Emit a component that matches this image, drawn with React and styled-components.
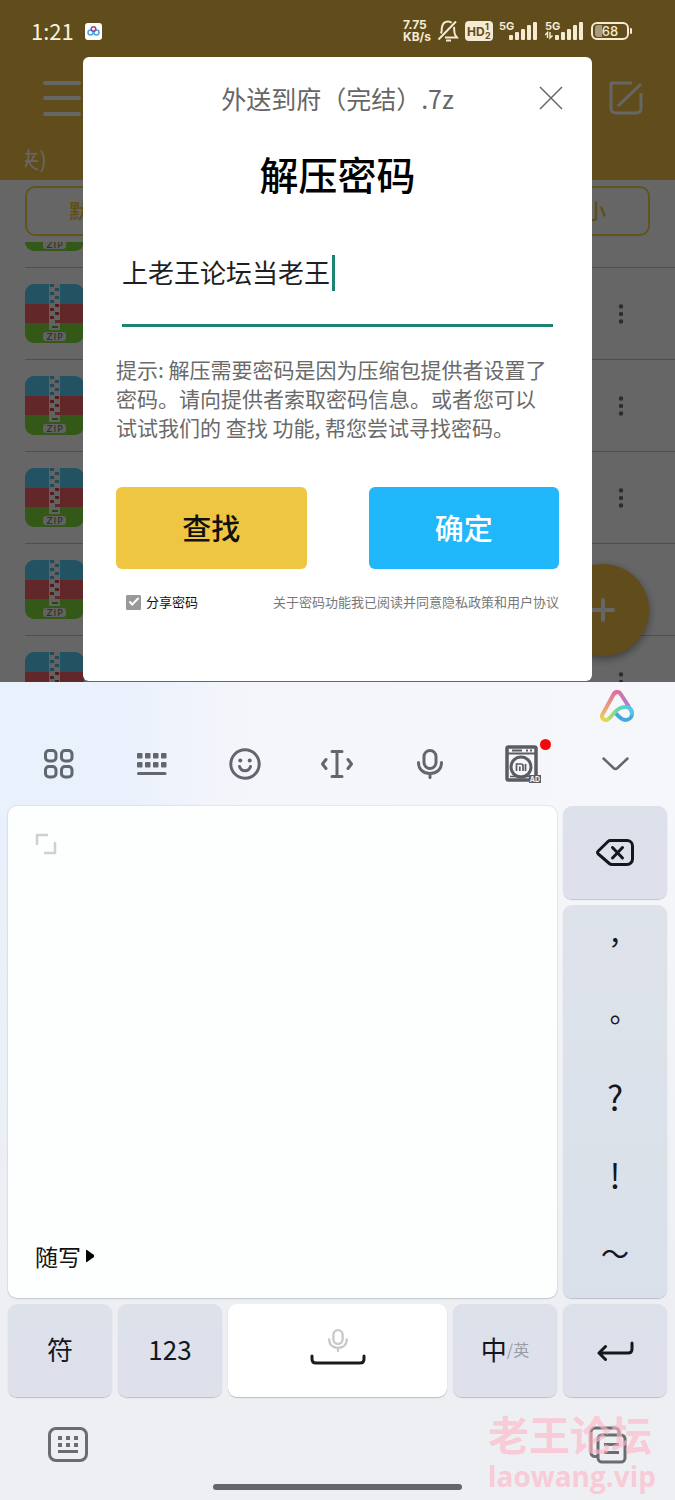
import React, { useState } from 'react';
import styled, { createGlobalStyle } from 'styled-components';

const FILES = [1, 2, 3, 4, 5, 6];
const PUNCTUATION = [
  { mark: '，', size: 28 },
  { mark: '。', size: 28 },
  { mark: '?', size: 34 },
  { mark: '!', size: 34 },
  { mark: '～', size: 28 },
];

const ZipIcon = () => (
  <svg width="59" height="59" viewBox="0 0 59 59">
    <defs>
      <clipPath id="zipShape"><rect width="59" height="59" rx="9" /></clipPath>
    </defs>
    <g clipPath="url(#zipShape)">
      <rect width="59" height="20" fill="#58cdf6" />
      <rect y="20" width="59" height="20" fill="#f56468" />
      <rect y="39" width="59" height="20" fill="#7fdc3c" />
      <rect x="24" width="11" height="46" fill="#f4f4f4" />
      {[0, 1, 2, 3, 4, 5, 6, 7, 8].map((i) => (
        <rect
          key={i}
          x={i % 2 ? 30 : 25}
          y={i * 4}
          width="4"
          height="3"
          fill={i < 5 ? '#58b4dc' : '#d0464a'}
        />
      ))}
      <rect x="30" y="36" width="5" height="3" fill="#f56468" />
      <rect x="27" y="42" width="6" height="2" fill="#5fae2c" />
      <rect x="18" y="48" width="23" height="9" rx="3" fill="#f4f4f4" />
      <text x="30" y="56" textAnchor="middle" fontSize="9" letterSpacing="1" fontFamily="DejaVu Sans, sans-serif" fill="#4f7a30">ZIP</text>
    </g>
  </svg>
);

const Signal = ({ data }) => (
  <svg width="40" height="24" viewBox="0 0 40 24" fill="#f5ead2">
    <text x="0" y="11" fontSize="11" fontWeight="700" fontFamily="Inter, sans-serif">5G</text>
    <rect x="10" y="16" width="4" height="5" rx="1" />
    <rect x="16" y="13" width="4" height="8" rx="1" />
    <rect x="22" y="10" width="4" height="11" rx="1" />
    <rect x="28" y="6" width="4" height="15" rx="1" />
    <rect x="34" y="3" width="4" height="18" rx="1" />
    {data && <path d="M0 16 2.500 13.500V19M5 13v6l2.500-2.500" fill="none" stroke="#f5ead2" strokeWidth="1.500" />}
  </svg>
);

const StatusIcons = () => (
  <>
    <Speed>7.75<br />KB/s</Speed>
    <svg width="22" height="24" viewBox="0 0 22 24" fill="none" stroke="#f5ead2" strokeWidth="2">
      <path d="M1.500 20.500 19 2.500" />
      <path d="M4 14.500c1-2 .500-4 1-6.500C5.700 4.600 8 2.500 11 2.500c1.500 0 2.700.500 3.700 1.300" />
      <path d="M17 8c.500 3-.200 6 1.200 8l1.800 2.500H8" />
      <path d="M9 21.500h5" />
    </svg>
    <svg width="28" height="20" viewBox="0 0 28 20">
      <rect width="28" height="20" rx="4" fill="#f5ead2" />
      <g fill="#614c1c" fontFamily="Inter, sans-serif" fontWeight="700">
        <text x="2" y="15" fontSize="12">HD</text>
        <text x="20" y="9" fontSize="9">1</text>
        <text x="20" y="18" fontSize="9">2</text>
      </g>
    </svg>
    <Signal />
    <Signal data />
    <svg width="42" height="20" viewBox="0 0 42 20">
      <rect x="1" y="2" width="36" height="16" rx="5" fill="none" stroke="#f5ead2" strokeWidth="2" />
      <path d="M4 7a3 3 0 0 1 3-3h4v12H7a3 3 0 0 1-3-3z" fill="#a99a78" />
      <rect x="39" y="7" width="2" height="6" rx="1" fill="#f5ead2" />
      <text x="19" y="15" textAnchor="middle" fontSize="13" fontWeight="500" fontFamily="Inter, sans-serif" fill="#f5ead2">68</text>
    </svg>
  </>
);

const CloudAppIcon = () => (
  <svg width="17" height="17" viewBox="0 0 17 17" fill="none" strokeWidth="1.500">
    <rect width="17" height="17" rx="3" fill="#fff" />
    <circle cx="5.500" cy="9.500" r="2.500" stroke="#49a4e8" />
    <circle cx="11.500" cy="9.500" r="2.500" stroke="#49a4e8" />
    <circle cx="8.500" cy="6" r="2.300" stroke="#b0407c" />
  </svg>
);

const AssistantLogo = () => (
  <svg width="34" height="32" viewBox="0 0 34 32" fill="none" strokeWidth="4" strokeLinecap="round" strokeLinejoin="round">
    <defs>
      <linearGradient id="legLeft" x1="0" y1="1" x2="0" y2="0">
        <stop offset="0" stopColor="#ead64c" />
        <stop offset=".45" stopColor="#eda07c" />
        <stop offset="1" stopColor="#de6f9c" />
      </linearGradient>
      <linearGradient id="legRight" x1="0" y1="0" x2="1" y2="1">
        <stop offset="0" stopColor="#e0709c" />
        <stop offset="1" stopColor="#a880d0" />
      </linearGradient>
      <linearGradient id="loop" x1="0" y1="0" x2="1" y2="0">
        <stop offset="0" stopColor="#dcdc50" />
        <stop offset=".5" stopColor="#5ad8b4" />
        <stop offset="1" stopColor="#58c4e8" />
      </linearGradient>
    </defs>
    <path d="M28.500 16 21 4.500C19 1.300 15.500 1.300 13.500 4.500" stroke="url(#legRight)" />
    <path d="M6 30c-3.400 0-5-3-3.300-6L13.500 4.500c1-1.700 2.400-2.500 3.800-2.500" stroke="url(#legLeft)" />
    <path d="M16 23.500c2.500 3 5.500 6.500 9.500 6.500 3.600 0 6.500-2.700 6.500-6.500 0-2-.800-3.700-2-5" stroke="#45a8dc" />
    <path d="M6 30c5.500 0 8-13 19.500-13 2.700 0 6.500 2 6.500 6.500" stroke="url(#loop)" />
  </svg>
);

const GridIcon = () => (
  <svg width="32" height="32" viewBox="0 0 32 32" fill="none" stroke="#63666d" strokeWidth="3">
    <rect x="2.500" y="2.500" width="10.500" height="10.500" rx="3.500" />
    <rect x="18.500" y="2.500" width="10.500" height="10.500" rx="3.500" />
    <rect x="2.500" y="18.500" width="10.500" height="10.500" rx="3.500" />
    <rect x="18.500" y="18.500" width="10.500" height="10.500" rx="3.500" />
  </svg>
);

const KeysIcon = () => (
  <svg width="30" height="24" viewBox="0 0 30 24" fill="#63666d">
    {[0, 8, 16, 24].map((x) => (
      <React.Fragment key={x}>
        <rect x={x} y="1" width="5.500" height="5.500" rx="1" />
        <rect x={x} y="10" width="5.500" height="5.500" rx="1" />
      </React.Fragment>
    ))}
    <rect y="20" width="29.500" height="3" rx="1.500" />
  </svg>
);

const SmileIcon = () => (
  <svg width="32" height="32" viewBox="0 0 32 32" fill="none" stroke="#63666d" strokeWidth="3" strokeLinecap="round">
    <circle cx="16" cy="16" r="14.200" />
    <path d="M10.500 18.500c1 3 3 4.300 5.500 4.300s4.500-1.300 5.500-4.300" />
    <g fill="#63666d" stroke="none">
      <circle cx="11.300" cy="12.500" r="2" />
      <circle cx="20.700" cy="12.500" r="2" />
    </g>
  </svg>
);

const CursorIcon = () => (
  <svg width="32" height="28" viewBox="0 0 32 28" fill="none" stroke="#63666d" strokeWidth="3" strokeLinecap="round" strokeLinejoin="round">
    <path d="M11 1.500h10M11 26.500h10M16 1.500v25M5 9.500 1.500 14 5 18.500M27 9.500l3.500 4.500-3.500 4.500" />
  </svg>
);

const MicIcon = ({ width = 26, height = 30, color = '#63666d' }) => (
  <svg width={width} height={height} viewBox="0 0 26 30" fill="none" stroke={color} strokeWidth="3" strokeLinecap="round">
    <rect x="7" y="1.500" width="12" height="18" rx="6" />
    <path d="M1.500 13.500c0 7 5 11 11.500 11s11.500-4 11.500-11M13 25v3.500" />
  </svg>
);

const WasherIcon = () => (
  <svg width="36" height="38" viewBox="0 0 36 38" fill="none" stroke="#5a5c61">
    <rect x="2" y="2" width="29" height="33" rx="1.500" strokeWidth="3.500" />
    <path d="M3 8.500h27" strokeWidth="2" />
    <path d="M7 5.500h10M21 5.500h2M25 5.500h2" strokeWidth="2" />
    <circle cx="16" cy="22" r="10" strokeWidth="3" />
    <path d="M11.500 26v-7h4.500c1.500 0 2 1 2 2v5M14.800 21.500v4.500M20.500 19v7" strokeWidth="1.700" />
    <path d="M5 31.500h22" strokeWidth="1.500" />
    <rect x="24" y="30" width="12" height="8" fill="#5a5c61" stroke="none" />
    <text x="30" y="36.500" textAnchor="middle" fontSize="7" fontWeight="700" fontFamily="Inter, sans-serif" fill="#f5f6fa" stroke="none">AD</text>
  </svg>
);

const ChevronIcon = () => (
  <svg width="27" height="14" viewBox="0 0 27 14" fill="none" stroke="#63666d" strokeWidth="2.500" strokeLinecap="round" strokeLinejoin="round">
    <path d="M1.500 1.500 11.500 11q2 1.800 4 0l10-9.500" />
  </svg>
);

const BackspaceIcon = () => (
  <svg width="38" height="27" viewBox="0 0 38 27" fill="none" stroke="#14171c" strokeWidth="3" strokeLinecap="round" strokeLinejoin="round">
    <path d="M14.500 1.500H31a5.500 5.500 0 0 1 5.500 5.500v13a5.500 5.500 0 0 1-5.500 5.500H16q-1.500 0-2.700-1L2.300 15q-1.600-1.500 0-3L12 2.500q1-1 2.500-1z" />
    <path d="m16.500 8.500 10 10.500M26.500 8.500l-10 10.500" />
  </svg>
);

const SpaceIcon = () => (
  <svg width="56" height="11" viewBox="0 0 56 11" fill="none" stroke="#1b1b1d" strokeWidth="3" strokeLinecap="round">
    <path d="M2 2v3q0 4 4 4h44q4 0 4-4V2" />
  </svg>
);

const EnterIcon = () => (
  <svg width="37" height="20" viewBox="0 0 37 20" fill="none" stroke="#14171c" strokeWidth="3" strokeLinecap="round" strokeLinejoin="round">
    <path d="M35 2v6q0 4-4 4H2M8.500 5.500 2 12l6.500 6.500" />
  </svg>
);

const SwitchKeyboardIcon = () => (
  <svg width="40" height="35" viewBox="0 0 40 35" fill="#6a6c70">
    <rect x="1.500" y="1.500" width="37" height="32" rx="6.500" fill="none" stroke="#6a6c70" strokeWidth="3" />
    {[10, 18, 26].map((x) => (
      <React.Fragment key={x}>
        <rect x={x} y="9" width="4" height="4" />
        <rect x={x} y="16" width="4" height="4" />
      </React.Fragment>
    ))}
    <rect x="10" y="23" width="20" height="3" />
  </svg>
);

const ClipboardIcon = () => (
  <svg width="38" height="38" viewBox="0 0 38 38" fill="none" stroke="#6a6c70" strokeWidth="3">
    <rect x="9" y="9" width="27" height="27" rx="4" />
    <path d="M8 30.500H6a4 4 0 0 1-4-4V6a4 4 0 0 1 4-4h20a4 4 0 0 1 4 4v2" />
    <path d="M15 18.500h15M15 26.500h15" />
  </svg>
);

const App = () => {
  const [password, setPassword] = useState('上老王论坛当老王');
  const [share, setShare] = useState(true);
  const [open, setOpen] = useState(true);

  return (
    <>
      <GlobalStyle />
      <Screen>
        <AppArea>
          <StatusBar>
            <Clock>1:21</Clock>
            <CloudAppIcon />
            <StatusRight>
              <StatusIcons />
            </StatusRight>
          </StatusBar>
          <TopBar>
            <IconButton aria-label="菜单">
              <svg width="56" height="36" viewBox="0 0 56 36" stroke="#fff" strokeWidth="4" strokeLinecap="round">
                <path d="M3 3h34M3 18h34M3 34h34" />
              </svg>
            </IconButton>
            <IconButton aria-label="编辑">
              <svg width="34" height="34" viewBox="0 0 34 34" fill="none" stroke="#fff" strokeWidth="3" strokeLinejoin="round">
                <path d="M23 2H2v25q0 5 5 5h20q5 0 5-5V12M9 25 32 3" />
              </svg>
            </IconButton>
          </TopBar>
          <PathBar><Crumb>夹)</Crumb></PathBar>
          <SortBar>
            <SortButton>默认</SortButton>
            <SortButton>大小</SortButton>
          </SortBar>
          <FileList>
            {FILES.map((id) => (
              <FileRow key={id}>
                <ZipIcon />
                <IconButton aria-label="更多">
                  <svg width="6" height="20" viewBox="0 0 6 20" fill="#707070">
                    <circle cx="3" cy="2.500" r="2.200" />
                    <circle cx="3" cy="10" r="2.200" />
                    <circle cx="3" cy="17.500" r="2.200" />
                  </svg>
                </IconButton>
              </FileRow>
            ))}
          </FileList>
          <AddButton aria-label="添加">
            <svg width="24" height="24" viewBox="0 0 24 24" stroke="#fff" strokeWidth="4" strokeLinecap="round">
              <path d="M12 2v20M2 12h20" />
            </svg>
          </AddButton>

          {open && (
            <Overlay>
              <Dialog role="dialog" aria-modal="true">
                <DialogHeader>
                  <FileName>外送到府（完结）.7z</FileName>
                  <CloseButton aria-label="关闭" onClick={() => setOpen(false)}>
                    <svg width="24" height="24" viewBox="0 0 24 24" stroke="#666" strokeWidth="1.500">
                      <path d="m1 1 22 22M23 1 1 23" />
                    </svg>
                  </CloseButton>
                </DialogHeader>
                <Title>解压密码</Title>
                <Field>
                  <PasswordInput
                    aria-label="解压密码"
                    value={password}
                    onChange={(e) => setPassword(e.target.value)}
                    style={{ width: `${password.length}em` }}
                  />
                  <Caret />
                </Field>
                <Hint>
                  提示: 解压需要密码是因为压缩包提供者设置了<br />
                  密码。请向提供者索取密码信息。或者您可以<br />
                  试试我们的 查找 功能, 帮您尝试寻找密码。
                </Hint>
                <Actions>
                  <ActionButton $bg="#efc642" $color="#111">查找</ActionButton>
                  <ActionButton $bg="#20b7fb" $color="#fff">确定</ActionButton>
                </Actions>
                <DialogFooter>
                  <ShareLabel>
                    <Checkbox type="checkbox" checked={share} onChange={() => setShare(!share)} />
                    分享密码
                  </ShareLabel>
                  <Agreement href="#agreement">关于密码功能我已阅读并同意隐私政策和用户协议</Agreement>
                </DialogFooter>
              </Dialog>
            </Overlay>
          )}
        </AppArea>

        <Keyboard>
          <LogoRow>
            <IconButton aria-label="助手"><AssistantLogo /></IconButton>
          </LogoRow>
          <Toolbar>
            <IconButton aria-label="功能"><GridIcon /></IconButton>
            <IconButton aria-label="键盘"><KeysIcon /></IconButton>
            <IconButton aria-label="表情"><SmileIcon /></IconButton>
            <IconButton aria-label="光标"><CursorIcon /></IconButton>
            <IconButton aria-label="语音"><MicIcon /></IconButton>
            <IconButton aria-label="推广"><WasherIcon /><Dot /></IconButton>
            <IconButton aria-label="收起"><ChevronIcon /></IconButton>
          </Toolbar>
          <Keys>
            <WritingPad>
              <IconButton aria-label="全屏">
                <svg width="22" height="22" viewBox="0 0 22 22" fill="none" stroke="#d0d0d0" strokeWidth="2.500">
                  <path d="M2 12V2h11M20 9v11H9" />
                </svg>
              </IconButton>
              <ModeButton>
                随写
                <svg width="8" height="12" viewBox="0 0 8 12"><path d="M0 0h1l7 5v2l-7 5H0z" /></svg>
              </ModeButton>
            </WritingPad>
            <SideKeys>
              <Key aria-label="删除"><BackspaceIcon /></Key>
              <Punctuation>
                {PUNCTUATION.map(({ mark, size }) => (
                  <PunctuationKey key={mark} $size={size}>{mark}</PunctuationKey>
                ))}
              </Punctuation>
            </SideKeys>
            <TextKey>符</TextKey>
            <TextKey>123</TextKey>
            <SpaceKey aria-label="空格">
              <MicIcon width={20} height={25} color="#c8c8c8" />
              <SpaceIcon />
            </SpaceKey>
            <TextKey>中<KeyHint>/英</KeyHint></TextKey>
            <Key aria-label="换行"><EnterIcon /></Key>
          </Keys>
          <BottomBar>
            <IconButton aria-label="切换键盘"><SwitchKeyboardIcon /></IconButton>
            <IconButton aria-label="剪贴板"><ClipboardIcon /></IconButton>
            <Watermark>
              <WatermarkName>老王论坛</WatermarkName>
              <WatermarkSite>laowang.vip</WatermarkSite>
            </Watermark>
          </BottomBar>
          <HomeBar />
        </Keyboard>
      </Screen>
    </>
  );
};

export default App;

const GlobalStyle = createGlobalStyle`
  *, *::before, *::after {
    box-sizing: border-box;
  }
  body {
    margin: 0;
    font-family: 'Noto Sans CJK SC', 'Noto Sans', sans-serif;
  }
  button, input {
    font-family: inherit;
  }
  svg {
    display: block;
    flex: none;
  }
`;

const Screen = styled.div`
  display: grid;
  grid-template-rows: minmax(0, 1fr) auto;
  height: 100vh;
`;

const AppArea = styled.main`
  position: relative;
  display: flex;
  flex-direction: column;
  overflow: hidden;
  background: #fff;
`;

const StatusBar = styled.div`
  display: flex;
  align-items: center;
  flex: none;
  gap: 11px;
  height: 57px;
  padding: 5px 42px 0 31px;
  background: #f2be44;

  > * {
    position: relative;
    z-index: 2;
  }
`;

const Clock = styled.span`
  padding-bottom: 2px;
  color: #f9f1de;
  font-size: 22px;
  line-height: 24px;
`;

const StatusRight = styled.div`
  display: flex;
  align-items: center;
  gap: 6px;
  margin-left: auto;
`;

const Speed = styled.span`
  color: #f5ead2;
  font-family: Inter, sans-serif;
  font-size: 12px;
  font-weight: 700;
  line-height: 12px;
`;

const TopBar = styled.header`
  display: flex;
  align-items: center;
  justify-content: space-between;
  flex: none;
  height: 81px;
  padding: 0 32px 0 42px;
  background: #f2be44;
`;

const IconButton = styled.button`
  position: relative;
  display: flex;
  align-items: center;
  justify-content: center;
  padding: 0;
  border: 0;
  background: none;
  cursor: pointer;
`;

const PathBar = styled.div`
  flex: none;
  height: 42px;
  padding: 4px 25px;
  background: #f2be44;
`;

const Crumb = styled.div`
  display: flex;
  justify-content: flex-end;
  width: 22px;
  overflow: hidden;
  color: #fff;
  font-size: 22px;
  line-height: 32px;
`;

const SortBar = styled.div`
  display: flex;
  justify-content: space-between;
  flex: none;
  height: 50px;
  margin: 6px 25px;
  padding: 0 42px 2px;
  border: 2px solid #f2d44a;
  border-radius: 10px;
`;

const SortButton = styled.button`
  padding: 0;
  border: 0;
  background: none;
  color: #e8c22c;
  font-size: 20px;
  font-weight: 500;
`;

const FileList = styled.div`
  flex: 1;
  min-height: 0;
  overflow: hidden;

  > :first-child {
    margin-top: -66px;
  }
`;

const FileRow = styled.div`
  display: flex;
  align-items: center;
  justify-content: space-between;
  height: 92px;
  margin-left: 25px;
  padding-right: 51px;
  border-bottom: 1px solid #c4c4c4;
`;

const AddButton = styled.button`
  position: absolute;
  right: 26px;
  bottom: 26px;
  display: flex;
  align-items: center;
  justify-content: center;
  width: 92px;
  height: 92px;
  border: 0;
  border-radius: 50%;
  background: #f2be44;
  box-shadow: 0 3px 8px rgba(0, 0, 0, 0.4);
`;

const Overlay = styled.div`
  position: absolute;
  inset: 0;
  z-index: 1;
  padding: 57px 83px 1px;
  background: rgba(0, 0, 0, 0.6);
`;

const Dialog = styled.section`
  height: 100%;
  border-radius: 6px;
  background: #fff;
`;

const DialogHeader = styled.div`
  display: grid;
  grid-template-columns: 1fr auto 1fr;
  align-items: center;
  height: 82px;
  padding: 0 29px;
`;

const FileName = styled.span`
  grid-column: 2;
  color: #666;
  font-size: 25px;
  line-height: 36px;
`;

const CloseButton = styled(IconButton)`
  justify-self: end;
`;

const Title = styled.h1`
  margin: 0;
  color: #000;
  font-size: 39px;
  font-weight: 500;
  line-height: 68px;
  text-align: center;
`;

const Field = styled.div`
  display: flex;
  align-items: center;
  margin: 0 39px;
  padding: 48px 0 33px;
  border-bottom: 3px solid #1d8471;
`;

const PasswordInput = styled.input`
  height: 36px;
  max-width: 100%;
  padding: 0 0 4px;
  border: 0;
  outline: 0;
  background: none;
  color: #1f1f1f;
  font-size: 26px;
`;

const Caret = styled.span`
  width: 3px;
  height: 36px;
  margin-left: 2px;
  background: #1d8471;
`;

const Hint = styled.p`
  margin: 28px 33px 0;
  color: #6a6a6a;
  font-size: 21px;
  line-height: 29px;
`;

const Actions = styled.div`
  display: flex;
  gap: 62px;
  margin: 45px 33px 0;
`;

const ActionButton = styled.button`
  flex: 1;
  height: 82px;
  padding: 0 0 2px;
  border: 0;
  border-radius: 6px;
  background: ${(props) => props.$bg};
  color: ${(props) => props.$color};
  font-size: 29px;
  font-weight: 500;
  cursor: pointer;
`;

const DialogFooter = styled.div`
  display: flex;
  align-items: center;
  justify-content: space-between;
  margin: 22px 33px 0;
  padding-left: 10px;
  font-size: 13px;
  line-height: 22px;
`;

const ShareLabel = styled.label`
  display: flex;
  align-items: center;
  gap: 5px;
  color: #111;
`;

const Checkbox = styled.input`
  display: grid;
  place-items: center;
  width: 15px;
  height: 15px;
  margin: 0;
  border: 1px solid #999;
  border-radius: 1px;
  appearance: none;

  &:checked {
    background: #999;
  }

  &:checked::after {
    content: '';
    width: 10px;
    height: 5px;
    margin-bottom: 3px;
    border-left: 2px solid #fff;
    border-bottom: 2px solid #fff;
    transform: rotate(-45deg);
  }
`;

const Agreement = styled.a`
  color: #777;
  text-decoration: none;
`;

const Keyboard = styled.section`
  background:
    linear-gradient(to bottom, rgba(237, 239, 243, 0) 15%, #edeff3 75%),
    linear-gradient(to right, #e8f1fc 0%, #ebf1fc 20%, #f5f6fa 38%, #f6f7fb 100%);
`;

const LogoRow = styled.div`
  display: flex;
  justify-content: flex-end;
  align-items: center;
  height: 48px;
  padding-right: 41px;
`;

const Toolbar = styled.div`
  display: grid;
  grid-template-columns: repeat(7, 1fr);
  align-items: center;
  justify-items: center;
  height: 68px;
  padding: 0 13px;
`;

const Dot = styled.span`
  position: absolute;
  top: -6px;
  right: -10px;
  width: 11px;
  height: 11px;
  border-radius: 50%;
  background: #ee0a0f;
`;

const Keys = styled.div`
  display: grid;
  grid-template-columns: 104px 104px 1fr 104px 104px;
  grid-template-rows: auto 93px;
  gap: 6px;
  padding: 8px 8px 0;
`;

const Key = styled.button`
  display: flex;
  align-items: center;
  justify-content: center;
  min-height: 93px;
  padding: 0;
  border: 0;
  border-radius: 9px;
  background: linear-gradient(#dce1ea, #dee0ea);
  box-shadow: 0 1px 1px rgba(90, 100, 120, 0.35);
  color: #14171c;
  font-size: 26px;
  cursor: pointer;
`;

const TextKey = styled(Key)`
  padding-bottom: 4px;
`;

const WritingPad = styled.div`
  display: flex;
  flex-direction: column;
  align-items: flex-start;
  justify-content: space-between;
  grid-column: 1 / 5;
  padding: 27px 27px 26px;
  border-radius: 9px;
  background: #fdfefe;
  box-shadow: 0 0 1px 1px rgba(90, 100, 120, 0.1), 0 1px 1px rgba(90, 100, 120, 0.2);
`;

const ModeButton = styled(IconButton)`
  gap: 5px;
  color: #111;
  font-size: 23px;
  line-height: 32px;
`;

const SideKeys = styled.div`
  display: flex;
  flex-direction: column;
  gap: 6px;
`;

const Punctuation = styled.div`
  display: flex;
  flex-direction: column;
  padding-bottom: 3px;
  border-radius: 9px;
  background: linear-gradient(#dee3eb, #d9e0e9);
  box-shadow: 0 1px 1px rgba(90, 100, 120, 0.35);
`;

const PunctuationKey = styled.button`
  height: 78px;
  padding: 0 0 6px;
  border: 0;
  background: none;
  color: #14171c;
  font-family: 'Noto Sans CJK TC', sans-serif;
  font-size: ${(props) => props.$size}px;
  line-height: 72px;
  cursor: pointer;
`;

const SpaceKey = styled(Key)`
  flex-direction: column;
  gap: 1px;
  padding-bottom: 8px;
  background: #fff;
`;

const KeyHint = styled.span`
  color: #9a9da6;
  font-size: 16px;
`;

const BottomBar = styled.div`
  position: relative;
  display: flex;
  align-items: center;
  justify-content: space-between;
  height: 87px;
  padding: 8px 48px 0;
`;

const Watermark = styled.div`
  position: absolute;
  top: 10px;
  right: 19px;
  color: rgba(255, 182, 198, 0.65);
  font-weight: 700;
  pointer-events: none;
`;

const WatermarkName = styled.div`
  font-size: 41px;
  line-height: 52px;
`;

const WatermarkSite = styled.div`
  font-family: 'Open Sans', sans-serif;
  font-size: 28px;
  line-height: 34px;
`;

const HomeBar = styled.div`
  width: 37%;
  height: 6px;
  margin: 0 auto 10px;
  border-radius: 3px;
  background: #65666b;
`;
